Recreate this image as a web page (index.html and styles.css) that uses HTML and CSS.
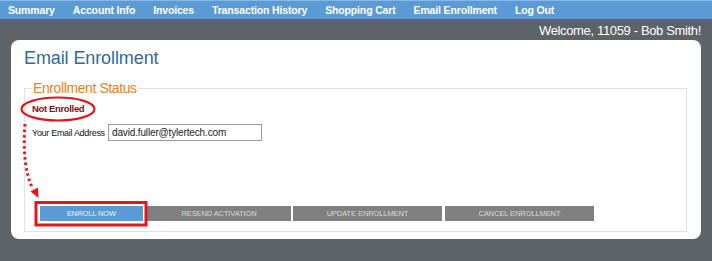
FILE: index.html
```html
<!DOCTYPE html>
<html>
<head>
<meta charset="utf-8">
<link rel="stylesheet" href="styles.css">
</head>
<body>
<nav class="nav">
  <a class="nav-item">Summary</a>
  <a class="nav-item">Account Info</a>
  <a class="nav-item">Invoices</a>
  <a class="nav-item">Transaction History</a>
  <a class="nav-item">Shopping Cart</a>
  <a class="nav-item">Email Enrollment</a>
  <a class="nav-item">Log Out</a>
</nav>
<div class="welcome">Welcome, 11059 - Bob Smith!</div>
<main class="card">
  <h1 class="title">Email Enrollment</h1>
  <fieldset class="status">
    <legend class="legend">Enrollment Status</legend>
    <div class="state">Not Enrolled</div>
    <div class="field">
      <label class="label">Your Email Address</label>
      <input class="input" type="text" value="david.fuller@tylertech.com">
    </div>
    <div class="buttons">
      <button class="btn btn-primary btn-enroll">ENROLL NOW</button>
      <button class="btn btn-resend">RESEND ACTIVATION</button>
      <button class="btn btn-update">UPDATE ENROLLMENT</button>
      <button class="btn btn-cancel">CANCEL ENROLLMENT</button>
    </div>
  </fieldset>
</main>
<svg class="annot" width="712" height="261" viewBox="0 0 712 261">
  <ellipse cx="58" cy="109" rx="36.5" ry="11.5" fill="none" stroke="#e8141c" stroke-width="2.2"/>
  <rect x="36" y="202.5" width="110" height="22.5" fill="none" stroke="#e8141c" stroke-width="3"/>
  <path d="M25 124 C 23 150, 25 174, 33 189" fill="none" stroke="#e8141c" stroke-width="3" stroke-dasharray="2.5 3"/>
  <polygon points="30.5,191.5 38,187.5 38.5,198" fill="#e8141c"/>
</svg>
</body>
</html>
```
FILE: styles.css
```css
html, body {
  margin: 0;
  padding: 0;
}
body {
  background: #5e6367;
  width: 712px;
  height: 261px;
  overflow: hidden;
  position: relative;
  font-family: "Liberation Sans", Arial, sans-serif;
}
.nav {
  display: flex;
  height: 18px;
  background: #5b9bd5;
  border-top: 1px solid #8ab7e4;
  padding-left: 8px;
  gap: 18px;
  align-items: center;
}
.nav-item {
  color: #ffffff;
  font-weight: bold;
  font-size: 10.5px;
  line-height: 18px;
  letter-spacing: -0.15px;
}
.welcome {
  height: 21px;
  line-height: 24px;
  text-align: right;
  padding-right: 11px;
  color: #ffffff;
  font-size: 13px;
  letter-spacing: -0.35px;
}
.card {
  margin: 0 11px;
  height: 199px;
  background: #ffffff;
  border-radius: 8px;
  padding: 6px 14px 0 13px;
  box-sizing: border-box;
}
.title {
  margin: 0;
  font-weight: normal;
  font-size: 18px;
  line-height: 24px;
  letter-spacing: -0.1px;
  color: #2f6aa1;
}
.status {
  margin: 9px 0 0 0;
  height: 153px;
  box-sizing: border-box;
  border: 1px solid #e2e2e2;
  padding: 5px 7px 10px 7px;
  display: flex;
  flex-direction: column;
}
.legend {
  padding: 0 1px;
  margin-left: 0;
  color: #e8821e;
  font-size: 14px;
  line-height: 18px;
  letter-spacing: -0.4px;
}
.state {
  color: #7b0f12;
  font-weight: bold;
  font-size: 9.5px;
  letter-spacing: -0.35px;
  line-height: 14px;
  height: 14px;
}
.field {
  display: flex;
  align-items: center;
  margin-top: 8px;
  height: 17px;
}
.label {
  flex-shrink: 0;
  font-size: 9px;
  letter-spacing: -0.3px;
  white-space: nowrap;
  color: #111;
  width: 76px;
}
.input {
  width: 154px;
  height: 17px;
  box-sizing: border-box;
  border: 1px solid #999;
  padding: 0 3px;
  font-family: "Liberation Sans", Arial, sans-serif;
  font-size: 10px;
  letter-spacing: -0.15px;
  color: #222;
  margin: 0;
}
.buttons {
  margin-top: auto;
  display: flex;
  gap: 2px;
  padding-left: 8px;
}
.btn {
  height: 15px;
  border: 0;
  margin: 0;
  padding: 0;
  background: #808080;
  color: #d9d9d9;
  font-family: "Liberation Sans", Arial, sans-serif;
  font-size: 7.5px;
  letter-spacing: -0.1px;
  line-height: 15px;
  text-align: center;
}
.btn-primary {
  background: #5b9bd5;
  color: #eef4fb;
}
.btn-enroll { width: 103px; margin-right: 2px; }
.btn-resend { width: 144px; }
.btn-update { width: 149px; }
.btn-cancel { width: 149px; margin-left: 1px; }
.annot {
  position: absolute;
  left: 0;
  top: 0;
  pointer-events: none;
}
```
